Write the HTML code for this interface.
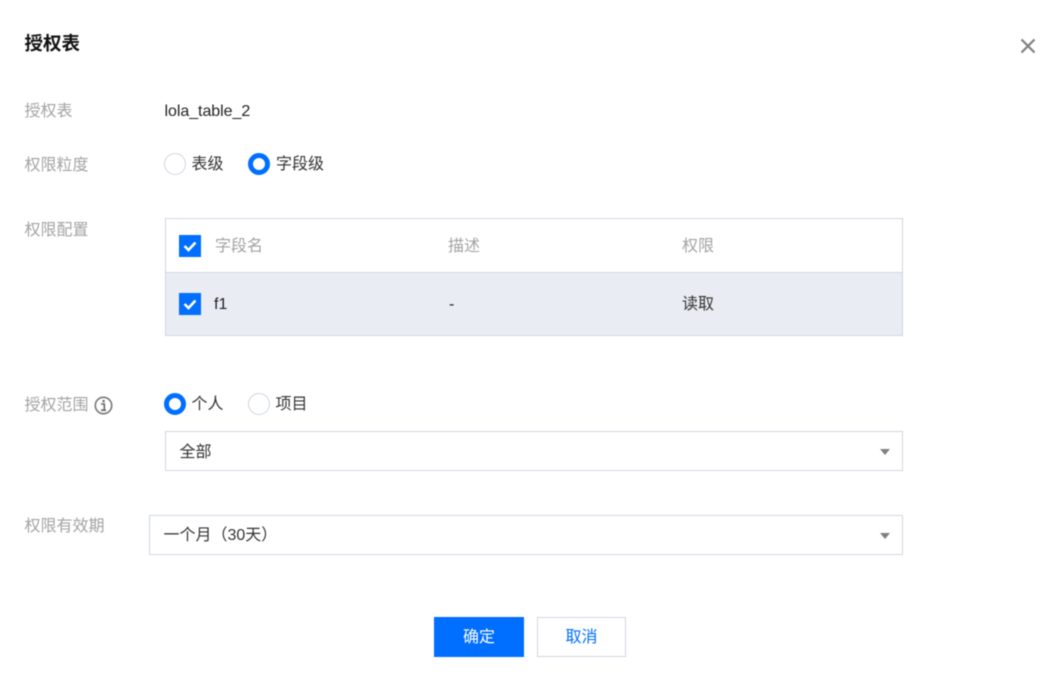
<!DOCTYPE html>
<html lang="zh-CN">
<head>
<meta charset="utf-8">
<title>授权表</title>
<style>
html,body{margin:0;padding:0;background:#fff;}
body{width:1061px;height:682px;overflow:hidden;position:relative;font-family:"Liberation Sans","Noto Sans CJK SC",sans-serif;font-size:16px;color:#333;}
#wrap{position:absolute;left:0;top:0;width:1061px;height:682px;filter:blur(0.5px);}
.a{position:absolute;white-space:nowrap;line-height:24px;}
.l{color:#a3a3a3;}
.h{color:#a3a3a3;}
.box{position:absolute;box-sizing:border-box;border:1px solid #d0d7e2;background:#fff;}
.r{position:absolute;box-sizing:border-box;width:22px;height:22px;border-radius:50%;border:1px solid #cfd6e2;background:#fff;}
.r.on{border:5.5px solid #006eff;}
.c{position:absolute;width:22px;height:22px;background:#006eff;}
.c svg{display:block;}
.arrow{position:absolute;width:0;height:0;border-left:5px solid transparent;border-right:5px solid transparent;border-top:6px solid #808080;}
</style>
</head>
<body>
<div id="wrap">
<div class="a" style="left:24.5px;top:32px;font-size:18.5px;font-weight:700;color:#111;">授权表</div>
<svg class="a" style="left:1019px;top:37px;" width="18" height="18" viewBox="0 0 18 18"><path d="M2.5 2.5L15.5 15.5M15.5 2.5L2.5 15.5" stroke="#808080" stroke-width="2.2" fill="none"/></svg>

<div class="a l" style="left:24.5px;top:100px;">授权表</div>
<div class="a" style="left:164.5px;top:100px;color:#222;letter-spacing:-0.05px;">lola_table_2</div>

<div class="a l" style="left:24.5px;top:154px;">权限粒度</div>
<div class="r" style="left:164px;top:153px;"></div>
<div class="a" style="left:191.5px;top:153px;">表级</div>
<div class="r on" style="left:248px;top:153px;"></div>
<div class="a" style="left:276px;top:153px;">字段级</div>

<div class="a l" style="left:24.5px;top:219px;">权限配置</div>
<div class="box" style="left:165px;top:218px;width:738px;height:118px;"></div>
<div class="a" style="left:166px;top:272px;width:736px;height:63px;background:#e9ecf2;border-top:1px solid #d0d7e2;box-sizing:border-box;"></div>
<div class="c" style="left:179px;top:235px;"><svg width="22" height="22" viewBox="0 0 22 22"><path d="M5.5 11L9.5 15L16.5 7.5" stroke="#fff" stroke-width="2.6" fill="none"/></svg></div>
<div class="a h" style="left:215px;top:235px;">字段名</div>
<div class="a h" style="left:448px;top:235px;">描述</div>
<div class="a h" style="left:682px;top:235px;">权限</div>
<div class="c" style="left:179px;top:293px;"><svg width="22" height="22" viewBox="0 0 22 22"><path d="M5.5 11L9.5 15L16.5 7.5" stroke="#fff" stroke-width="2.6" fill="none"/></svg></div>
<div class="a" style="left:214px;top:293px;color:#222;">f1</div>
<div class="a" style="left:449px;top:293px;color:#222;">-</div>
<div class="a" style="left:682px;top:293px;">读取</div>

<div class="a l" style="left:24.5px;top:394px;">授权范围</div>
<svg class="a" style="left:94px;top:396px;" width="20" height="20" viewBox="0 0 20 20"><circle cx="9.5" cy="9.5" r="8.2" fill="none" stroke="#777" stroke-width="1.6"/><rect x="8.5" y="4" width="2.2" height="2.2" fill="#666"/><path d="M7 8H10.3V14M7 14.2H12" fill="none" stroke="#666" stroke-width="1.6"/></svg>
<div class="r on" style="left:164px;top:393px;"></div>
<div class="a" style="left:191.5px;top:393px;">个人</div>
<div class="r" style="left:248px;top:393px;"></div>
<div class="a" style="left:275.5px;top:393px;">项目</div>

<div class="box" style="left:165px;top:431px;width:738px;height:40px;"></div>
<div class="a" style="left:179.5px;top:441px;">全部</div>
<div class="arrow" style="left:880px;top:449px;"></div>

<div class="a l" style="left:24.5px;top:515px;">权限有效期</div>
<div class="box" style="left:149px;top:515px;width:754px;height:40px;"></div>
<div class="a" style="left:163.5px;top:524px;">一个月（30天）</div>
<div class="arrow" style="left:880px;top:533px;"></div>

<div class="a" style="left:434px;top:617px;width:90px;height:40px;line-height:41px;background:#006eff;color:#fff;text-align:center;">确定</div>
<div class="box" style="left:537px;top:617px;width:89px;height:40px;line-height:39px;color:#006eff;text-align:center;">取消</div>
</div>
</body>
</html>
